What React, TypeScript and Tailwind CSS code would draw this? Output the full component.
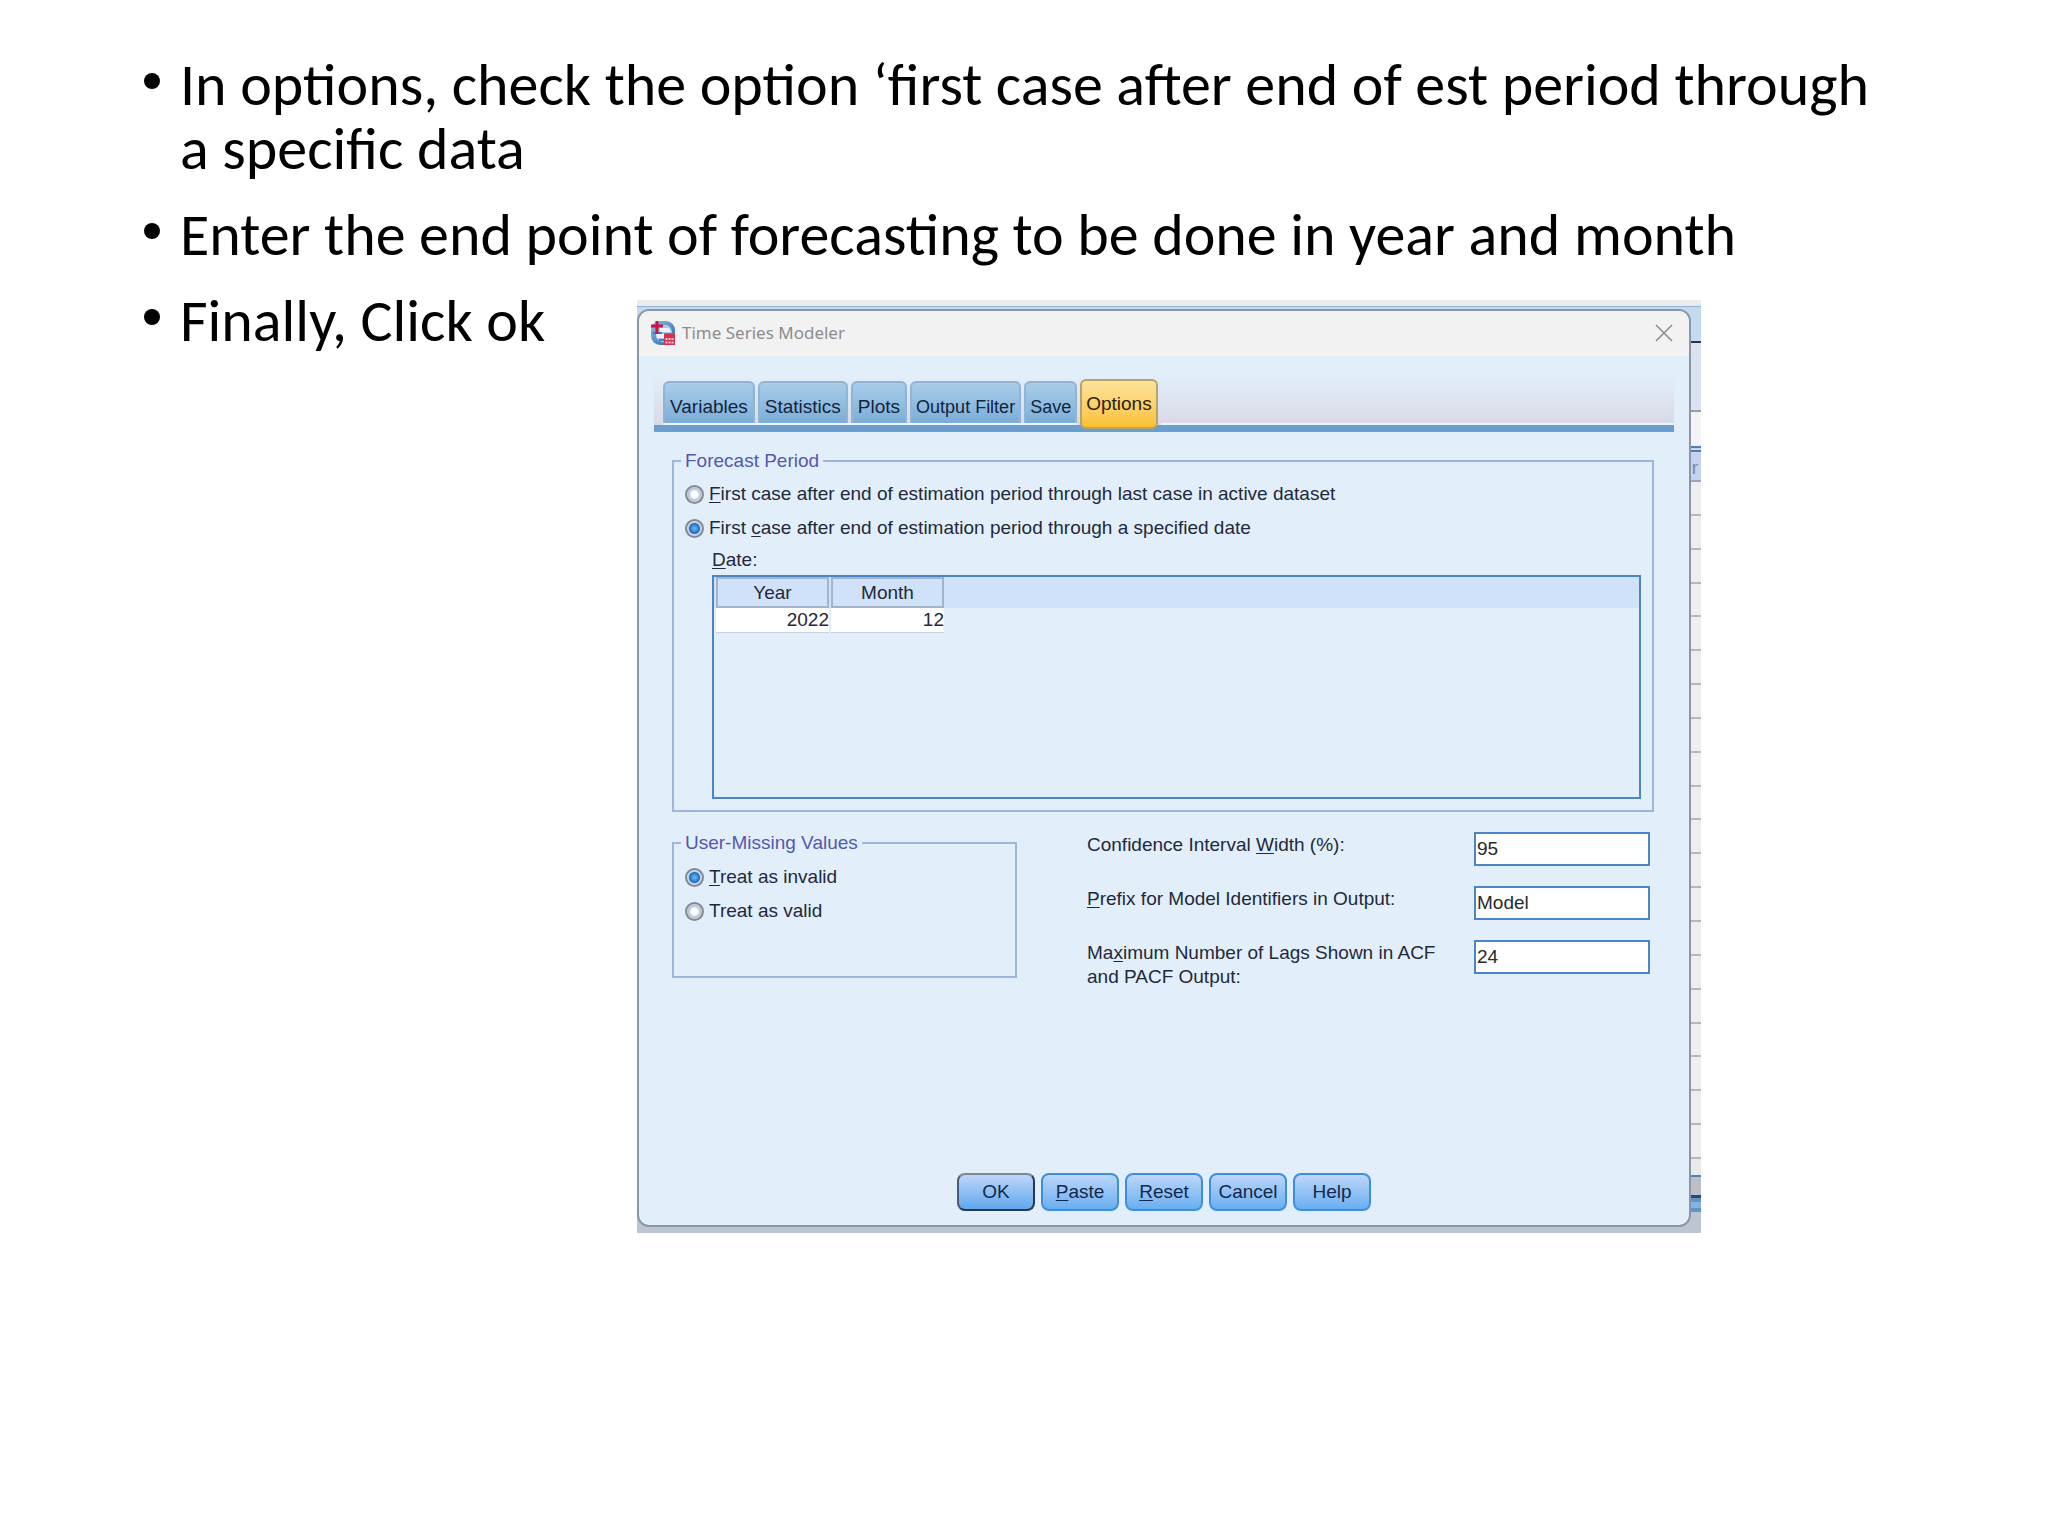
import React from "react";

const rows = Array.from({ length: 20 }, (_, i) => i);

function Key({ children }: { children: string }) {
  return <span className="underline underline-offset-2">{children}</span>;
}

function Tab({ small = false, children }: { small?: boolean; children: string }) {
  return (
    <button
      type="button"
      role="tab"
      aria-selected="false"
      className={`h-[42px] whitespace-nowrap rounded-t-md border-2 border-b-0 border-[#93b3d2] bg-linear-to-b from-[#a9cdea] to-[#7badd8] pt-2 text-[#14243c] ${
        small ? "px-1 text-[18px]" : "px-[5px] text-[19px]"
      }`}
    >
      {children}
    </button>
  );
}

function Radio({
  name,
  checked = false,
  children,
}: {
  name: string;
  checked?: boolean;
  children: React.ReactNode;
}) {
  return (
    <label className="flex h-[34px] items-center gap-[5px] text-[19px] text-[#23293a]">
      <input
        type="radio"
        name={name}
        defaultChecked={checked}
        className="size-[19px] shrink-0 appearance-none rounded-full border-2 border-[#818b98] bg-[radial-gradient(circle,#ffffff_0_3px,#b9c1cb_6px,#dfe5ec_8px)] checked:bg-[radial-gradient(circle,#5fb0ee_0_1px,#1f6cc0_5px,#c3d3e4_6px,#d5dfe9_8px)]"
      />
      <span>{children}</span>
    </label>
  );
}

function Field({
  id,
  value,
  children,
}: {
  id: string;
  value: string;
  children: React.ReactNode;
}) {
  return (
    <div className="flex h-[54px] items-start justify-between">
      <label htmlFor={id} className="w-[360px] pt-px text-[19px] text-[#23293a]">
        {children}
      </label>
      <input
        id={id}
        type="text"
        defaultValue={value}
        className="h-[34px] w-[176px] border-2 border-[#4a86c5] bg-white px-px text-[19px] text-[#2a2a2a]"
      />
    </div>
  );
}

function Action({ primary = false, children }: { primary?: boolean; children: React.ReactNode }) {
  return (
    <button
      type="button"
      className={
        primary
          ? "h-[38px] w-[78px] rounded-lg border-2 border-[#26384f] border-t-[#7e8794] border-l-[#4a5c74] bg-linear-to-b from-[#bcd6fa] to-[#5fa7ec] text-[19px] text-[#13294b]"
          : "h-[38px] w-[78px] rounded-lg border-2 border-[#3d8fdc] bg-linear-to-b from-[#bcd6fa] to-[#68aef0] text-[19px] text-[#13294b]"
      }
    >
      {children}
    </button>
  );
}

function Backdrop() {
  return (
    <div aria-hidden="true" className="absolute inset-0 flex flex-col bg-[#b9c0cb] font-['Liberation_Sans',Arial,sans-serif]">
      <div className="h-[7px] border-b border-[#92b2d2] bg-[#ebebed]" />
      <div className="h-[36px] border-b-2 border-[#2b3547] bg-[#c3dbf0]" />
      <div className="h-[69px] border-b-2 border-[#9b9ea6] bg-[#dbe3f2]" />
      <div className="h-[34px] bg-[#f4f4f6]" />
      <div className="h-[6px] border-y-2 border-[#4f7fb8] bg-[#c9d8ee]" />
      <div className="h-[30px] overflow-hidden border-b-2 border-[#9aa6c0] bg-[#c5d3f2] text-right text-[19px] leading-8 text-[#7c86a0]">
        <span className="pr-[3px]">r</span>
      </div>
      <div className="flex flex-1 flex-col">
        {rows.map((i) => (
          <div key={i} className="flex-1 border-b-2 border-[#b4b8bc] bg-[#eeeeee]" />
        ))}
      </div>
      <div className="h-[16px] bg-[#eaeaea]" />
      <div className="h-[20px] border-t-2 border-[#4a84c0] bg-[#bcbfc5]" />
      <div className="h-[3px] bg-[#2f4a70]" />
      <div className="h-[14px] border-y-4 border-[#5c94cc] bg-[#85b2de]" />
      <div className="h-[21px] bg-[#bcc5d1]" />
    </div>
  );
}

function AppIcon() {
  return (
    <svg viewBox="0 0 26 26" className="size-[26px] shrink-0" aria-hidden="true">
      <defs>
        <linearGradient id="globe" x1="0" y1="0" x2="1" y2="1">
          <stop offset="0" stopColor="#8fbfe6" />
          <stop offset="1" stopColor="#2a62a2" />
        </linearGradient>
      </defs>
      <rect x="1" y="1" width="24" height="24" rx="9" fill="url(#globe)" />
      <path d="M8 5h9c3 1 5 4 5 8h-8v9c-4 0-7-2-8-5z" fill="#a9cbea" />
      <path d="M10 8h9l2 4H10zM6 14h8v4H7z" fill="#e9f3fb" />
      <path d="M3 13h9M9 20h5" stroke="#3f7dbd" strokeWidth="2" />
      <path d="M7 1v13M1 6h12" stroke="#c8163f" strokeWidth="3" />
      <path d="M14 14h11v11H14z" fill="#cf3350" />
      <path
        d="M15.500 18h2v2h-2zM18.500 18h2v2h-2zM21.500 18h2v2h-2zM15.500 21.500h2v2h-2zM18.500 21.500h2v2h-2zM21.500 21.500h2v2h-2z"
        fill="#f7c9d1"
      />
    </svg>
  );
}

function ModelerDialog() {
  return (
    <section
      aria-label="Time Series Modeler"
      className="relative mt-[9px] mr-[10px] mb-[6px] overflow-hidden rounded-xl border-2 border-[#8b97a6] bg-[#e2effb] font-['Liberation_Sans',Arial,sans-serif] leading-6"
    >
      <header className="flex h-[45px] items-center justify-between bg-[#f2f2f3] pr-[15px] pb-[2px] pl-[11px]">
        <div className="flex items-center gap-[6px]">
          <AppIcon />
          <h2 className="font-['Noto_Sans',sans-serif] text-[17px] text-[#8d8d8d]">Time Series Modeler</h2>
        </div>
        <button type="button" aria-label="Close" className="flex size-5 items-center justify-center">
          <svg viewBox="0 0 20 20" className="size-5">
            <path d="M2 2l16 16M18 2L2 18" stroke="#8e8e8e" strokeWidth="1.6" />
          </svg>
        </button>
      </header>

      <div className="px-[15px] pt-[19px]">
        <div
          role="tablist"
          className="flex h-[57px] items-start gap-[3px] border-b-[7px] border-[#6b9fd0] bg-linear-to-b from-[#e2effb] to-[#d9d9e6] pl-[9px]"
        >
          <div className="flex items-start gap-[3px] border-b-2 border-[#edf4fb] pt-[6px]">
            <Tab>Variables</Tab>
            <Tab>Statistics</Tab>
            <Tab>Plots</Tab>
            <Tab small>Output Filter</Tab>
            <Tab small>Save</Tab>
          </div>
          <button
            type="button"
            role="tab"
            aria-selected="true"
            className="relative mt-1 h-[50px] shrink-0 rounded-md border-2 border-[#b5a566] bg-linear-to-b from-[#fde39b] to-[#fbc02f] px-1 text-[19px] text-[#2b220c]"
          >
            Options
          </button>
          <div className="h-[50px] flex-1 border-b-2 border-[#edf4fb]" />
        </div>
      </div>

      <div className="pr-[35px] pl-[33px]">
        <fieldset className="mt-[17px] border-2 border-[#9db7da] pr-[11px] pb-[11px] pl-[7px]">
          <legend className="px-1 text-[19px] text-[#5558ac]">Forecast Period</legend>
          <div className="pt-1 pl-1">
            <Radio name="period">
              <Key>F</Key>irst case after end of estimation period through last case in active dataset
            </Radio>
            <Radio name="period" checked>
              First <Key>c</Key>ase after end of estimation period through a specified date
            </Radio>
          </div>
          <div className="pl-[31px]">
            <p className="h-[30px] text-[19px] leading-[30px] text-[#23293a]">
              <Key>D</Key>ate:
            </p>
            <div className="h-[224px] border-2 border-[#4a86c5]">
              <div className="bg-linear-to-b from-[#cfe2fa] from-[31px] to-transparent to-[31px]">
                <table className="border-separate border-spacing-x-[2px] border-spacing-y-0 text-[19px] text-[#23293a]">
                  <thead>
                    <tr>
                      <th className="h-[31px] w-[113px] border-2 border-[#a3b4c9] p-0 pt-px font-normal">Year</th>
                      <th className="h-[31px] w-[113px] border-2 border-[#a3b4c9] p-0 pt-px font-normal">Month</th>
                    </tr>
                  </thead>
                  <tbody>
                    <tr>
                      <td className="h-[25px] border-b border-[#c8d2dd] bg-white p-0 text-right">2022</td>
                      <td className="h-[25px] border-b border-[#c8d2dd] bg-white p-0 text-right">12</td>
                    </tr>
                  </tbody>
                </table>
              </div>
            </div>
          </div>
        </fieldset>

        <div className="mt-[19px] flex items-start justify-between pr-[4px]">
          <fieldset className="h-[147px] w-[345px] border-2 border-[#9db7da] pl-[7px]">
            <legend className="px-1 text-[19px] text-[#5558ac]">User-Missing Values</legend>
            <div className="pt-[5px] pl-1">
              <Radio name="missing" checked>
                <Key>T</Key>reat as invalid
              </Radio>
              <Radio name="missing">Treat as valid</Radio>
            </div>
          </fieldset>
          <div className="mt-px w-[563px]">
            <Field id="width" value="95">
              Confidence Interval <Key>W</Key>idth (%):
            </Field>
            <Field id="prefix" value="Model">
              <Key>P</Key>refix for Model Identifiers in Output:
            </Field>
            <Field id="lags" value="24">
              Ma<Key>x</Key>imum Number of Lags Shown in ACF and PACF Output:
            </Field>
          </div>
        </div>
      </div>

      <footer className="flex justify-center gap-[6px] pt-[179px] pb-[14px]">
        <Action primary>OK</Action>
        <Action>
          <Key>P</Key>aste
        </Action>
        <Action>
          <Key>R</Key>eset
        </Action>
        <Action>Cancel</Action>
        <Action>Help</Action>
      </footer>
    </section>
  );
}

function Bullet() {
  return <span aria-hidden="true" className="mt-[20px] mr-[20px] size-4 shrink-0 rounded-full bg-black" />;
}

export default function App() {
  return (
    <main className="min-h-screen bg-white pt-[53px] pr-[160px] pl-[144px] font-[Carlito,Lato,sans-serif] text-[60px] leading-[64px] text-black">
      <ul className="flex flex-col gap-[22px]">
        <li className="flex items-start">
          <Bullet />
          <span>In options, check the option ‘first case after end of est period through a specific data</span>
        </li>
        <li className="flex items-start">
          <Bullet />
          <span>Enter the end point of forecasting to be done in year and month</span>
        </li>
        <li className="flex items-start">
          <Bullet />
          <span className="w-[457px] shrink-0">Finally, Click ok</span>
          <div className="relative mt-[11px] mr-[187px] flex-1">
            <Backdrop />
            <ModelerDialog />
          </div>
        </li>
      </ul>
    </main>
  );
}
